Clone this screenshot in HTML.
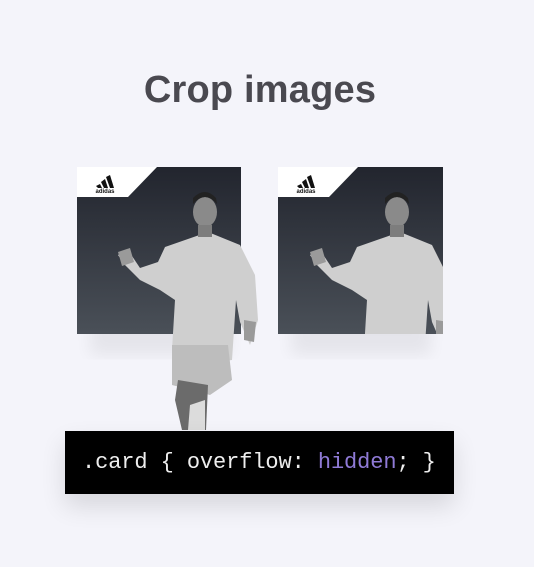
<!DOCTYPE html>
<html><head><style>
body{margin:0;width:534px;height:567px;background:#f4f4fa;position:relative;overflow:hidden;font-family:"Liberation Sans",sans-serif}
h1{position:absolute;left:0;width:520px;top:69px;margin:0;text-align:center;font-size:38px;font-weight:bold;color:#4a4950;letter-spacing:0.2px}
.code{position:absolute;left:65px;top:431px;width:389px;height:63px;background:#000;box-shadow:0 12px 25px rgba(0,0,0,.12);color:#eee;font-family:"Liberation Mono","DejaVu Sans Mono",monospace;font-size:22px;line-height:63px;text-indent:17px;white-space:pre;letter-spacing:-0.1px}
.code span{color:#8f7ad6}
svg{position:absolute;left:0;top:0}
</style></head><body>
<h1>Crop images</h1>
<svg width="534" height="567">
<defs>
<linearGradient id="g" x1="0" y1="0" x2="0" y2="1"><stop offset="0" stop-color="#22252e"/><stop offset="1" stop-color="#4a5058"/></linearGradient>
<filter id="b"><feGaussianBlur stdDeviation="8"/></filter>
<g id="p">
<path d="M165,247 L208,232 L240,245 L255,275 L258,320 L250,345 L240,322 L236,300 L232,360 L215,362 L195,362 L172,350 L175,300 L160,290 L140,280 L125,265 L118,255 L128,250 L140,268 L158,262 Z" fill="#cfcfcf"/>
<path d="M172,345 L228,345 L232,380 L210,395 L172,385 Z" fill="#bdbdbd"/>
<path d="M178,380 L208,385 L206,430 L182,430 L175,400 Z" fill="#6b6b6b"/>
<path d="M190,405 L205,400 L205,430 L188,430Z" fill="#dcdcdc"/>
<ellipse cx="205" cy="212" rx="12" ry="15" fill="#8a8a8a"/>
<path d="M193,204 Q205,190 217,204 L216,198 Q205,186 193,198Z" fill="#222"/>
<rect x="198" y="225" width="14" height="12" fill="#7d7d7d"/>
<path d="M118,252 L130,248 L134,262 L122,266Z" fill="#9a9a9a"/>
<path d="M244,320 L256,322 L254,342 L244,340Z" fill="#9a9a9a"/>
</g>
<clipPath id="c"><rect x="278" y="167" width="165" height="167"/></clipPath>
</defs>
<rect x="90" y="310" width="140" height="45" fill="#000" opacity=".06" filter="url(#b)"/>
<rect x="291" y="310" width="140" height="45" fill="#000" opacity=".06" filter="url(#b)"/>
<rect x="77" y="167" width="164" height="167" fill="url(#g)"/>
<polygon points="77,167 157,167 128,197 77,197" fill="#fff"/>
<rect x="278" y="167" width="165" height="167" fill="url(#g)"/>
<polygon points="278,167 358,167 329,197 278,197" fill="#fff"/>
<g fill="#111"><polygon points="96,186 100,184 102,188 98,188"/><polygon points="101,182 105,179 108,188 104,188"/><polygon points="106,177 110,175 114,188 110,188"/></g>
<text x="105" y="193" font-size="6" text-anchor="middle" font-weight="bold" fill="#111">adidas</text>
<g fill="#111"><polygon points="297,186 301,184 303,188 299,188"/><polygon points="302,182 306,179 309,188 305,188"/><polygon points="307,177 311,175 315,188 311,188"/></g>
<text x="306" y="193" font-size="6" text-anchor="middle" font-weight="bold" fill="#111">adidas</text>
<use href="#p"/>
<g clip-path="url(#c)"><use href="#p" transform="translate(192,0)"/></g>
</svg>
<div class="code">.card { overflow: <span>hidden</span>; }</div>
</body></html>
